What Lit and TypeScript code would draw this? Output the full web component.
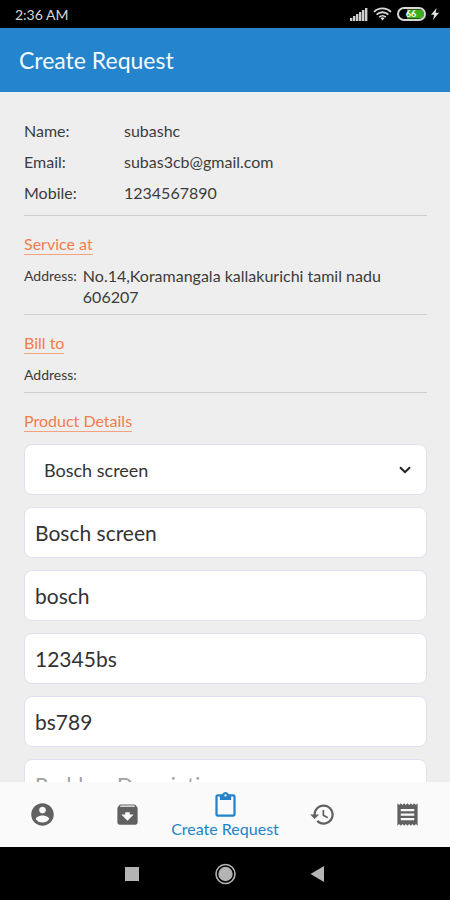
import { LitElement, html, css, svg } from "lit";
import { customElement, state } from "lit/decorators.js";
import { classMap } from "lit/directives/class-map.js";

const ICONS: Record<string, string> = {
  account:
    "M12 2C6.48 2 2 6.48 2 12s4.48 10 10 10 10-4.48 10-10S17.52 2 12 2zm0 3c1.66 0 3 1.34 3 3s-1.34 3-3 3-3-1.34-3-3 1.34-3 3-3zm0 14.2c-2.5 0-4.71-1.28-6-3.22.03-1.99 4-3.08 6-3.08 1.99 0 5.97 1.09 6 3.08-1.29 1.94-3.5 3.22-6 3.22z",
  archive:
    "M20.54 5.23l-1.39-1.68C18.88 3.21 18.47 3 18 3H6c-.47 0-.88.21-1.16.55L3.46 5.23C3.17 5.57 3 6.02 3 6.5V19c0 1.1.9 2 2 2h14c1.1 0 2-.9 2-2V6.5c0-.48-.17-.93-.46-1.27zM12 17.5L6.5 12H10v-2h4v2h3.5L12 17.5zM5.12 5l.81-1h12l.94 1H5.12z",
  clipboard:
    "M19 2h-4.18C14.4.84 13.3 0 12 0c-1.3 0-2.4.84-2.82 2H5c-1.1 0-2 .9-2 2v16c0 1.1.9 2 2 2h14c1.1 0 2-.9 2-2V4c0-1.1-.9-2-2-2zm-7 0c.55 0 1 .45 1 1s-.45 1-1 1-1-.45-1-1 .45-1 1-1zm7 18H5V4h2v3h10V4h2v16z",
  history:
    "M13 3c-4.97 0-9 4.03-9 9H1l3.89 3.89.07.14L9 12H6c0-3.87 3.13-7 7-7s7 3.13 7 7-3.13 7-7 7c-1.93 0-3.68-.79-4.94-2.06l-1.42 1.42C8.27 19.99 10.51 21 13 21c4.97 0 9-4.03 9-9s-4.03-9-9-9zm-1 5v5l4.28 2.54.72-1.21-3.5-2.08V8H12z",
  receipt:
    "M18 17H6v-2h12v2zm0-4H6v-2h12v2zm0-4H6V7h12v2zM3 22l1.5-1.5L6 22l1.5-1.5L9 22l1.5-1.5L12 22l1.5-1.5L15 22l1.5-1.5L18 22l1.5-1.5L21 22V2l-1.5 1.5L18 2l-1.5 1.5L15 2l-1.5 1.5L12 2l-1.5 1.5L9 2 7.5 3.5 6 2 4.5 3.5 3 2v20z",
};

const TABS = [
  { id: "account", label: "Account" },
  { id: "archive", label: "Archive" },
  { id: "clipboard", label: "Create Request" },
  { id: "history", label: "History" },
  { id: "receipt", label: "Receipts" },
];

@customElement("status-bar")
class StatusBar extends LitElement {
  static styles = css`
    :host {
      display: flex;
      align-items: center;
      justify-content: space-between;
      height: 28px;
      padding: 0 11px 0 15px;
      background: #000;
      color: #d8d8d8;
      font-size: 14px;
    }
    .icons {
      display: flex;
      align-items: center;
      gap: 5px;
    }
    svg {
      display: block;
    }
    .level {
      font-size: 9px;
      font-weight: 700;
      fill: #fff;
    }
  `;
  render() {
    return html`
      <span>2:36 AM</span>
      <div class="icons">
        <svg width="18" height="13" viewBox="0 0 18 13" fill="#d0d0d0">
          ${[0, 1, 2, 3, 4, 5].map(
            (i) => svg`<rect x=${i * 3} y=${10 - i * 2} width="2.4" height=${3 + i * 2} />`
          )}
        </svg>
        <svg width="19" height="14" viewBox="0 0 19 14" fill="none" stroke="#d8d8d8" stroke-width="1.8">
          <path d="M1 4.8a12.4 12.4 0 0 1 17 0M3.6 7.6a8.6 8.6 0 0 1 11.8 0M6.2 10.2a4.8 4.8 0 0 1 6.6 0" />
          <path d="M9.5 13.6l-2-2.4a3 3 0 0 1 4 0z" fill="#d8d8d8" stroke="none" />
        </svg>
        <svg width="29" height="14" viewBox="0 0 29 14">
          <path d="M10 2.5h12.5a4.5 4.5 0 0 1 0 9H10z" fill="#3fae1c" />
          <rect x="1" y="1" width="27" height="12" rx="6" fill="none" stroke="#d8d8d8" stroke-width="2" />
          <text class="level" x="14" y="10" text-anchor="middle">66</text>
        </svg>
        <svg width="8" height="12" viewBox="0 0 8 12" fill="#e4e4e4">
          <path d="M5.6 0L0 6.8h3.2L2 12l6-7.2H4.6z" />
        </svg>
      </div>
    `;
  }
}

@customElement("tab-bar")
class TabBar extends LitElement {
  @state() active = "clipboard";
  static styles = css`
    :host {
      display: flex;
      height: 65px;
      background: #fafafa;
    }
    .tab {
      flex: 85 1 0;
      min-width: 0;
      display: flex;
      flex-direction: column;
      align-items: center;
      justify-content: center;
      padding: 0;
      border: 0;
      background: none;
      color: #616161;
      font: inherit;
      font-size: 16px;
      line-height: 20px;
      white-space: nowrap;
      cursor: pointer;
    }
    .active {
      flex-grow: 110;
      padding-top: 2px;
      color: #2283cb;
    }
    svg {
      display: block;
      fill: currentColor;
    }
  `;
  render() {
    return TABS.map(
      (t) => html`
        <button
          class=${classMap({ tab: true, active: t.id === this.active })}
          aria-label=${t.label}
          @click=${() => (this.active = t.id)}
        >
          <svg width="27" height="27" viewBox="0 0 24 24"><path d=${ICONS[t.id]} /></svg>
          ${t.id === this.active ? html`<span>${t.label}</span>` : ""}
        </button>
      `
    );
  }
}

@customElement("system-nav")
class SystemNav extends LitElement {
  static styles = css`
    :host {
      display: flex;
      align-items: center;
      justify-content: center;
      gap: 70px;
      height: 53px;
      background: #000;
    }
    .key {
      display: flex;
      padding: 0;
      border: 0;
      background: none;
    }
  `;
  render() {
    return html`
      <button class="key" aria-label="Recent apps">
        <svg width="24" height="24" viewBox="0 0 24 24"><rect x="6" y="5" width="14" height="14" fill="#b4b4b4" /></svg>
      </button>
      <button class="key" aria-label="Home">
        <svg width="24" height="24" viewBox="0 0 24 24">
          <circle cx="12.5" cy="12" r="9.5" fill="none" stroke="#b4b4b4" stroke-width="1.6" />
          <circle cx="12.5" cy="12" r="7.2" fill="#b4b4b4" />
        </svg>
      </button>
      <button class="key" aria-label="Back">
        <svg width="24" height="24" viewBox="0 0 24 24"><path d="M3.5 12L17 4v16z" fill="#b4b4b4" /></svg>
      </button>
    `;
  }
}

@customElement("app-root")
class AppRoot extends LitElement {
  static styles = css`
    :host {
      display: flex;
      flex-direction: column;
      height: 100vh;
      overflow: hidden;
      background: #eeeeee;
      color: #3c3c3c;
      font-family: Lato, "Open Sans", sans-serif;
      font-size: 16px;
    }
    status-bar,
    .header,
    tab-bar,
    system-nav {
      flex: none;
    }
    .header {
      display: flex;
      align-items: center;
      height: 64px;
      padding: 0 19px;
      background: #2484cc;
      color: #f4faff;
    }
    .title {
      margin: 0;
      font-size: 23px;
      font-weight: 400;
    }
    .content {
      flex: 1;
      min-height: 0;
      overflow: hidden;
      padding: 23px 23px 0 24px;
    }
    .row {
      display: grid;
      grid-template-columns: 100px 1fr;
      line-height: 31px;
    }
    .info,
    .address,
    .value {
      margin: 0;
    }
    .section {
      padding-bottom: 7px;
      border-bottom: 1px solid #cecece;
    }
    .heading {
      width: fit-content;
      margin: 18px 0 10px;
      border-bottom: 1px solid #f5a27e;
      color: #f47c4a;
      font-size: 16px;
      font-weight: 400;
      line-height: 20px;
    }
    .address {
      display: flex;
      gap: 6px;
      line-height: 21px;
    }
    .small {
      font-size: 14px;
    }
    .fields {
      display: flex;
      flex-direction: column;
      gap: 12px;
      margin-top: 12px;
    }
    .picker {
      display: grid;
      align-items: center;
    }
    .picker > * {
      grid-area: 1 / 1;
    }
    .chevron {
      justify-self: end;
      margin-right: 16px;
      pointer-events: none;
    }
    .field {
      box-sizing: border-box;
      width: 100%;
      height: 51px;
      padding: 0 10px;
      border: 1px solid #e0e0f2;
      border-radius: 8px;
      outline: 0;
      background: #fff;
      color: #333;
      font: inherit;
      font-size: 21px;
    }
    .select {
      appearance: none;
      padding: 0 19px;
      font-size: 18px;
    }
    .field::placeholder {
      color: #a0a0a0;
      opacity: 1;
    }
  `;

  private info = [
    ["Name:", "subashc"],
    ["Email:", "subas3cb@gmail.com"],
    ["Mobile:", "1234567890"],
  ];
  private fields = [
    ["Product", "Bosch screen"],
    ["Brand", "bosch"],
    ["Model number", "12345bs"],
    ["Serial number", "bs789"],
  ];

  render() {
    return html`
      <status-bar></status-bar>
      <header class="header"><h1 class="title">Create Request</h1></header>
      <main class="content">
        <dl class="info section">
          ${this.info.map(([k, v]) => html`<div class="row"><dt>${k}</dt><dd class="value">${v}</dd></div>`)}
        </dl>
        <section class="section">
          <h2 class="heading">Service at</h2>
          <dl class="address">
            <dt class="small">Address:</dt>
            <dd class="value">No.14,Koramangala kallakurichi tamil nadu 606207</dd>
          </dl>
        </section>
        <section class="section">
          <h2 class="heading">Bill to</h2>
          <dl class="address"><dt class="small">Address:</dt></dl>
        </section>
        <h2 class="heading">Product Details</h2>
        <form class="fields">
          <div class="picker">
            <select class="field select" aria-label="Product type">
              <option>Bosch screen</option>
            </select>
            <svg class="chevron" width="12" height="8" viewBox="0 0 12 8" fill="none" stroke="#222" stroke-width="2">
              <path d="M1 1.2l5 5 5-5" />
            </svg>
          </div>
          ${this.fields.map(([label, v]) => html`<input class="field" aria-label=${label} .value=${v} />`)}
          <input class="field" aria-label="Problem Description" placeholder="Problem Description" />
        </form>
      </main>
      <tab-bar></tab-bar>
      <system-nav></system-nav>
    `;
  }
}
